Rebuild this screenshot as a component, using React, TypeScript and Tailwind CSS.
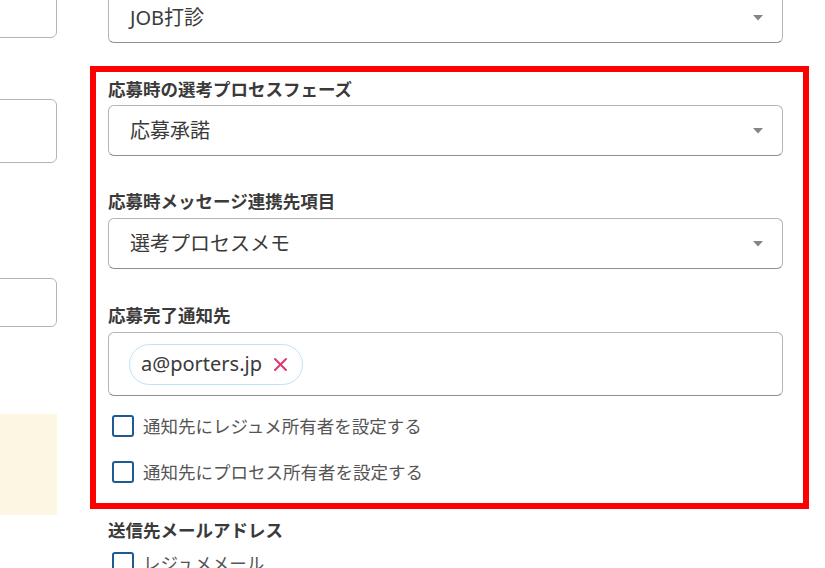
import React from "react";

const FONT = { fontFamily: '"Noto Sans", "Noto Sans CJK JP", sans-serif' };

function Select({ value }: { value: string }) {
  return (
    <div className="flex h-[51px] w-[675px] items-center justify-between rounded-[6px] border border-[#b4b4b4] border-b-[#8f8f8f] bg-white pl-[21px] pr-[19px]">
      <span className="text-[20px] leading-none text-[#3a3a3a]">{value}</span>
      <svg width="10" height="6" viewBox="0 0 10 6">
        <polygon points="0,0 10,0 5,5.5" fill="#858585" />
      </svg>
    </div>
  );
}

function Label({ children }: { children: React.ReactNode }) {
  return (
    <div className="h-[24px] text-[17.5px] font-bold leading-[24px] text-[#3a3a3a]">
      {children}
    </div>
  );
}

function Check({ label }: { label: string }) {
  return (
    <div className="flex h-[24px] items-center pl-[4px]">
      <span className="box-border h-[22px] w-[22px] shrink-0 rounded-[3px] border-[2.5px] border-[#1f5b92] bg-white" />
      <span className="ml-[9px] text-[17.5px] leading-[24px] text-[#555555]">{label}</span>
    </div>
  );
}

export default function App() {
  return (
    <div style={FONT} className="flex h-[568px] w-[825px] gap-[33px] overflow-hidden bg-white">
      <div className="flex w-[57px] shrink-0 flex-col overflow-hidden">
        <div className="ml-[-200px] mt-[-26px] h-[64px] w-[257px] shrink-0 rounded-[6px] border border-[#b4b4b4]" />
        <div className="ml-[-200px] mt-[61px] h-[64px] w-[257px] shrink-0 rounded-[6px] border border-[#b4b4b4]" />
        <div className="ml-[-200px] mt-[115px] h-[49px] w-[257px] shrink-0 rounded-[6px] border border-[#b4b4b4]" />
        <div className="mt-[87px] h-[101px] w-[57px] shrink-0 bg-[#fdf6e2]" />
      </div>
      <div className="mt-[-8px] flex w-[719px] shrink-0 flex-col">
        <div className="ml-[18px]">
          <Select value="JOB打診" />
        </div>
        <div className="mt-[23px] border-[6px] border-[#ff0000] pb-[19px] pl-[12px] pr-[20px] pt-[5px]">
          <Label>応募時の選考プロセスフェーズ</Label>
          <div className="mt-[4px]">
            <Select value="応募承諾" />
          </div>
          <div className="mt-[33px]">
            <Label>応募時メッセージ連携先項目</Label>
          </div>
          <div className="mt-[5px]">
            <Select value="選考プロセスメモ" />
          </div>
          <div className="mt-[34px]">
            <Label>応募完了通知先</Label>
          </div>
          <div className="mt-[5px] flex h-[64px] w-[675px] items-center rounded-[6px] border border-[#b4b4b4] border-b-[#8f8f8f] pl-[20px]">
            <div className="flex h-[41px] items-center rounded-full border border-[#bde4f5] pl-[11px] pr-[14px]">
              <span className="text-[20px] leading-none text-[#3a3a3a]">a@porters.jp</span>
              <svg className="ml-[11px]" width="15" height="15" viewBox="0 0 15 15">
                <line x1="2" y1="2" x2="13" y2="13" stroke="#e0356f" strokeWidth="2" strokeLinecap="round" />
                <line x1="13" y1="2" x2="2" y2="13" stroke="#e0356f" strokeWidth="2" strokeLinecap="round" />
              </svg>
            </div>
          </div>
          <div className="mt-[18px]">
            <Check label="通知先にレジュメ所有者を設定する" />
          </div>
          <div className="mt-[22px]">
            <Check label="通知先にプロセス所有者を設定する" />
          </div>
        </div>
        <div className="ml-[18px] mt-[9px]">
          <Label>送信先メールアドレス</Label>
          <div className="mt-[9px]">
            <Check label="レジュメメール" />
          </div>
        </div>
      </div>
    </div>
  );
}
